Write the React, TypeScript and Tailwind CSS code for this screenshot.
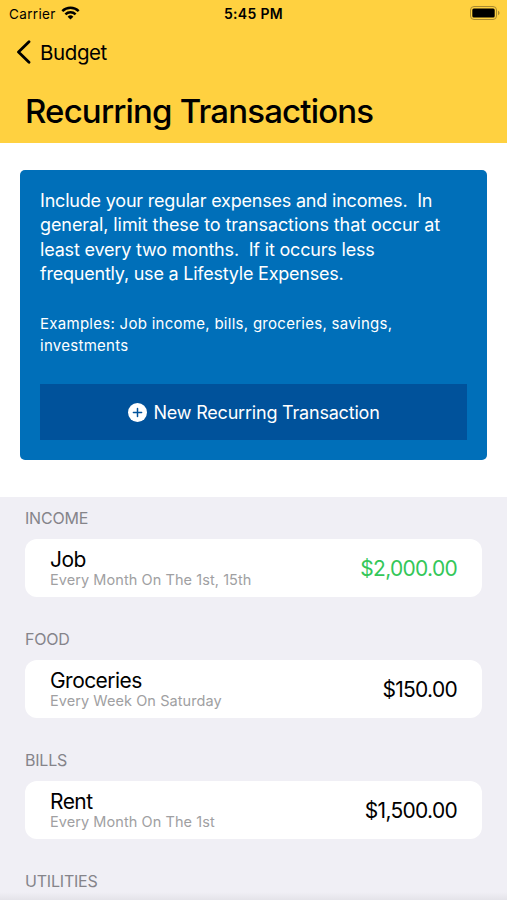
const groups = [
  { title: "INCOME", name: "Job", schedule: "Every Month On The 1st, 15th", amount: "$2,000.00", income: true },
  { title: "FOOD", name: "Groceries", schedule: "Every Week On Saturday", amount: "$150.00", income: false },
  { title: "BILLS", name: "Rent", schedule: "Every Month On The 1st", amount: "$1,500.00", income: false },
];

const StatusBar = () => (
  <div className="grid h-7 grid-cols-3 items-center pl-[9px] pr-[7px]">
    <div className="flex items-center gap-[5px] text-[13.5px] tracking-[0.35px]">
      <span>Carrier</span>
      <svg className="mb-[3px]" width="19" height="14" viewBox="0 0 19 14" fill="none" stroke="black" strokeWidth="2.5">
        <path d="M1.3 5.1a11.8 11.8 0 0 1 16.4 0" />
        <path d="M4.4 8.4a7.3 7.3 0 0 1 10.2 0" />
        <path d="M9.5 13.6 6.6 10.7a4.1 4.1 0 0 1 5.8 0z" fill="black" stroke="none" />
      </svg>
    </div>
    <div className="pb-[2px] pr-[2px] text-center text-[14px] font-semibold tracking-[0.3px]">5:45 PM</div>
    <svg className="mb-[2px] justify-self-end" width="30" height="14" viewBox="0 0 30 14">
      <rect x="0.5" y="0.5" width="26" height="13" rx="3.5" fill="none" stroke="#a88a30" />
      <rect x="2.3" y="2.5" width="22.4" height="9" rx="1.5" />
      <path d="M28 4.8c2 .7 2 3.7 0 4.4z" fill="#a88a30" />
    </svg>
  </div>
);

const App = () => {
  return (
    <div className="relative h-[900px] w-[507px] overflow-hidden bg-[#f0eff5] font-[Inter,sans-serif] text-black">
      <header className="h-[143px] bg-[#ffd140]">
        <StatusBar />
        <div className="flex h-12 items-center gap-2 pl-4 text-[20.5px] tracking-[-0.4px]">
          <svg width="16" height="24" viewBox="0 0 16 24" fill="none" stroke="black" strokeWidth="2.8" strokeLinecap="round" strokeLinejoin="round">
            <path d="M13 1.8 2.5 12 13 22.2" />
          </svg>
          <span className="pt-[2px]">Budget</span>
        </div>
        <h1 className="pl-[25px] pt-[13px] text-[33px] font-medium leading-[44px] tracking-[-0.83px]">Recurring Transactions</h1>
      </header>

      <section className="h-[353.5px] bg-white px-5 pt-[26.5px]">
        <div className="h-[290px] rounded-[5px] bg-[#006fb9] px-5 pt-[19px] text-white">
          <p className="whitespace-pre text-[18px] leading-[24.5px]">
            <span className="block tracking-[-0.2px]">{"Include your regular expenses and incomes.  In"}</span>
            <span className="block tracking-[-0.09px]">general, limit these to transactions that occur at</span>
            <span className="block tracking-[-0.18px]">{"least every two months.  If it occurs less"}</span>
            <span className="block tracking-[-0.22px]">frequently, use a Lifestyle Expenses.</span>
          </p>
          <p className="mt-[26.5px] whitespace-pre text-[15px] leading-[22px] tracking-[0.28px]">
            {"Examples: Job income, bills, groceries, savings,\ninvestments"}
          </p>
          <button className="mt-[27px] flex h-14 w-full items-center justify-center gap-[6px] bg-[#00529b] pl-px text-[18px] tracking-[-0.2px]">
            <svg width="19" height="19" viewBox="0 0 19 19">
              <circle cx="9.5" cy="9.5" r="9.5" fill="white" />
              <path d="M9.5 5.4v8.2M5.4 9.5h8.2" stroke="#00529b" strokeWidth="1.5" strokeLinecap="round" />
            </svg>
            <span>New Recurring Transaction</span>
          </button>
        </div>
      </section>

      <main className="px-[25px] pt-[9.5px]">
        {groups.map((group) => (
          <section key={group.title} className="mb-[30.5px]">
            <h2 className="h-[33px] text-[16px] leading-6 tracking-[-0.2px] text-[#85848a]">{group.title}</h2>
            <div className="flex h-[57.5px] items-center justify-between rounded-xl bg-white px-[25px] pt-[2px]">
              <div>
                <div className="text-[21px] leading-[22px] tracking-[-0.55px]">{group.name}</div>
                <div className="text-[14.5px] leading-[18px] tracking-[0.07px] text-[#a0a0a2]">{group.schedule}</div>
              </div>
              <div className={`text-[21px] tracking-[-0.7px] ${group.income ? "text-[#34c759]" : ""}`}>{group.amount}</div>
            </div>
          </section>
        ))}
        <h2 className="text-[16px] leading-6 tracking-[-0.2px] text-[#85848a]">UTILITIES</h2>
      </main>
      <div className="absolute inset-x-0 bottom-0 h-2 bg-linear-to-b from-transparent to-black/5" />
    </div>
  );
};

export default App;
